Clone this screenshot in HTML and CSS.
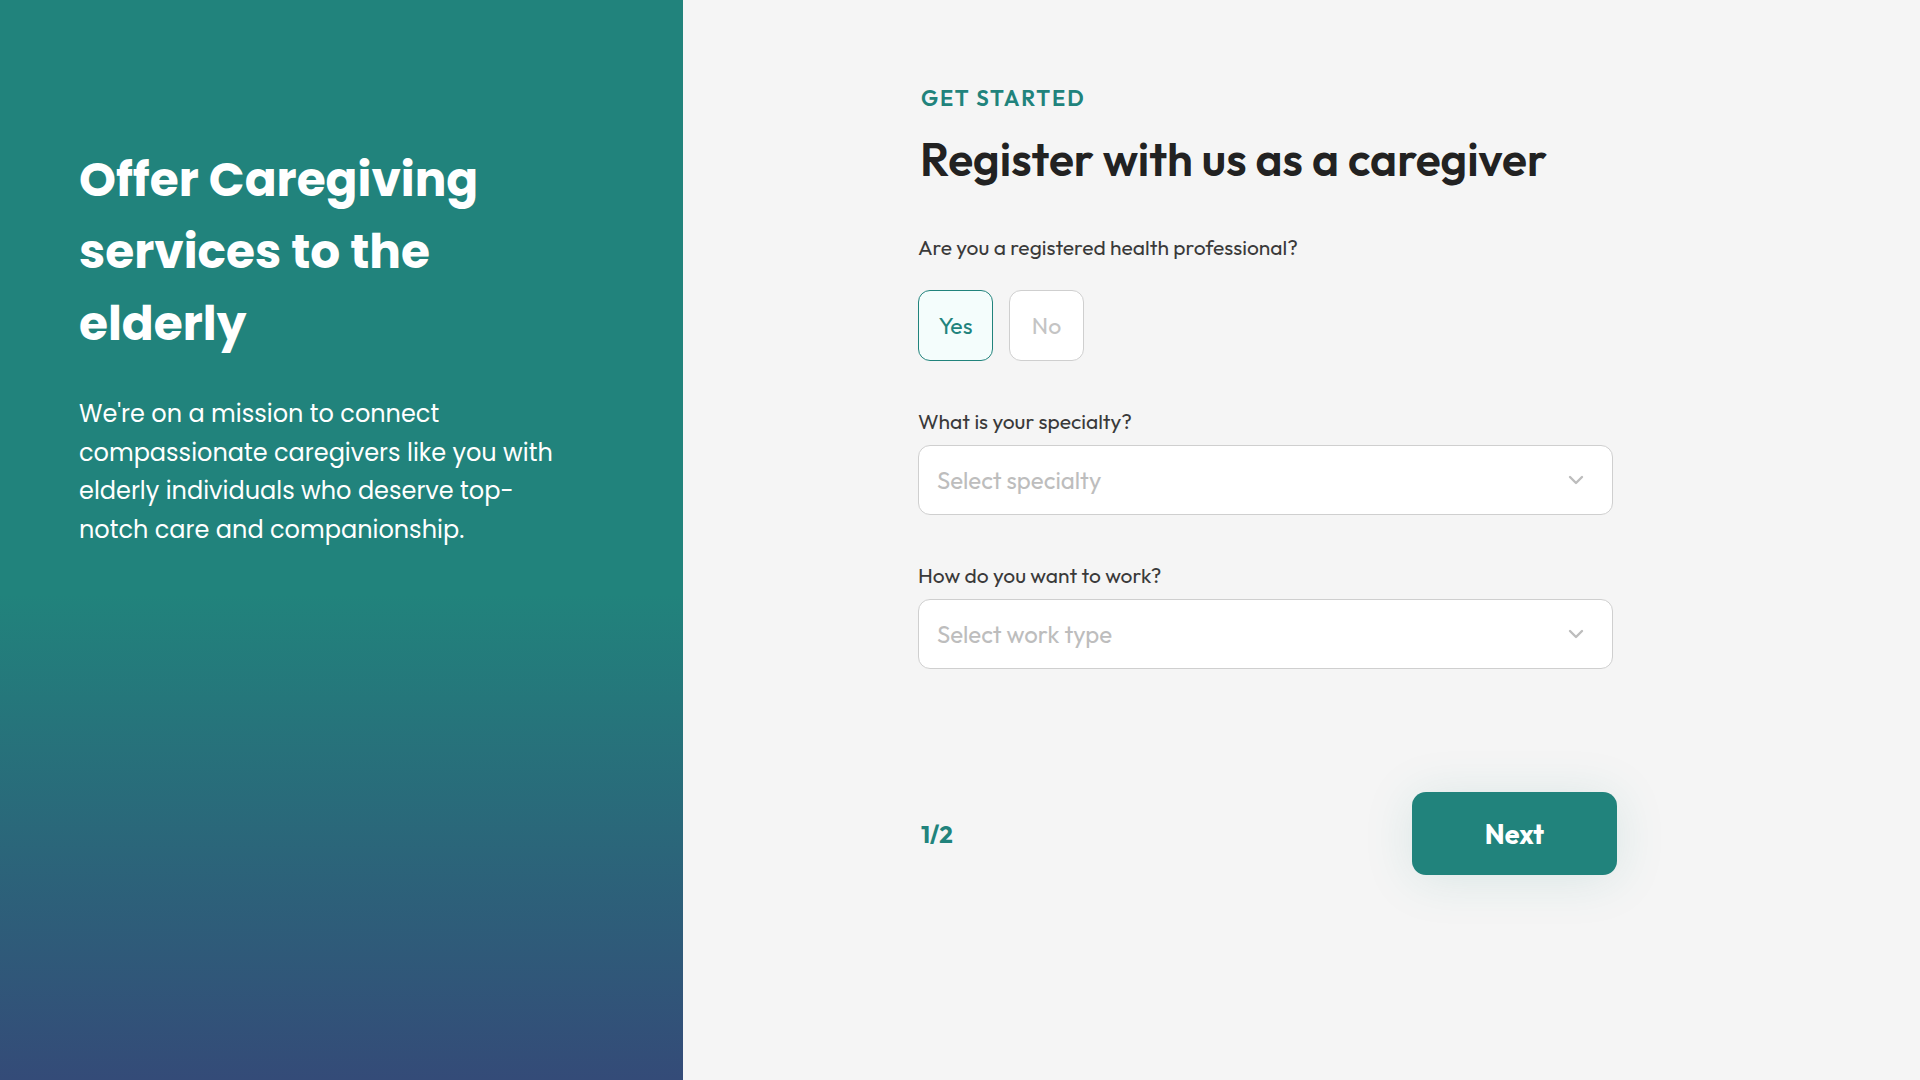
FILE: index.html
```html
<!DOCTYPE html>
<html lang="en">
<head>
<meta charset="utf-8">
<title>Register as a caregiver</title>
<link rel="stylesheet" href="styles.css">
</head>
<body>
<div class="page">
  <aside class="hero">
    <h1 class="hero-title">Offer Caregiving services to the elderly</h1>
    <p class="hero-text">We're on a mission to connect compassionate caregivers like you with elderly individuals who deserve top-notch care and companionship.</p>
  </aside>
  <main class="panel">
    <form class="form">
      <div class="eyebrow">GET STARTED</div>
      <h2 class="title">Register with us as a caregiver</h2>

      <div class="field field-choice">
        <div class="label">Are you a registered health professional?</div>
        <div class="choices">
          <button type="button" class="choice choice-active">Yes</button>
          <button type="button" class="choice">No</button>
        </div>
      </div>

      <div class="field">
        <div class="label">What is your specialty?</div>
        <div class="select">
          <span class="placeholder">Select specialty</span>
          <svg class="chevron" width="16" height="10" viewBox="0 0 16 10"><path d="M2 2 L8 8 L14 2" fill="none" stroke="#bdbdbd" stroke-width="2.4" stroke-linecap="round" stroke-linejoin="round"/></svg>
        </div>
      </div>

      <div class="field">
        <div class="label">How do you want to work?</div>
        <div class="select">
          <span class="placeholder">Select work type</span>
          <svg class="chevron" width="16" height="10" viewBox="0 0 16 10"><path d="M2 2 L8 8 L14 2" fill="none" stroke="#bdbdbd" stroke-width="2.4" stroke-linecap="round" stroke-linejoin="round"/></svg>
        </div>
      </div>

      <div class="footer">
        <span class="step">1/2</span>
        <button type="button" class="next">Next</button>
      </div>
    </form>
  </main>
</div>
</body>
</html>
```
FILE: styles.css
```css
* { box-sizing: border-box; }
html, body { margin: 0; padding: 0; }
body {
  width: 1920px;
  height: 1080px;
  overflow: hidden;
  background: #f5f5f5;
  font-family: "Outfit", "Urbanist", "Lato", sans-serif;
}
.page {
  display: flex;
  height: 1080px;
}
.hero {
  width: 683px;
  flex: 0 0 683px;
  background: linear-gradient(to bottom, #21837c 0%, #21837c 55%, #344b78 100%);
  padding: 144px 80px 0 79px;
  color: #fff;
  font-family: "Poppins", "Open Sans", sans-serif;
}
.hero-title {
  margin: 0;
  font-size: 47px;
  line-height: 72px;
  font-weight: 700;
  max-width: 460px;
}
.hero-text {
  margin: 35px 0 0 0;
  font-size: 24px;
  line-height: 38.5px;
  font-weight: 400;
  max-width: 495px;
}
.panel {
  flex: 1;
  padding: 84px 0 0 235px;
}
.form {
  width: 698px;
  display: flex;
  flex-direction: column;
}
.eyebrow {
  font-size: 22px;
  line-height: 28px;
  font-weight: 600;
  color: #21837c;
  letter-spacing: 1.9px;
  padding-left: 3px;
}
.title {
  margin: 19px 0 0 0;
  font-size: 46px;
  line-height: 56px;
  font-weight: 600;
  color: #222;
  padding-left: 2px;
}
.field {
  display: flex;
  flex-direction: column;
  gap: 11px;
  margin-top: 47px;
}
.field-choice { gap: 30px; }
.label {
  font-size: 21px;
  line-height: 26px;
  color: #3a3a3a;
}
.choices {
  display: flex;
  gap: 16px;
}
.choice {
  width: 75px;
  height: 71px;
  border-radius: 12px;
  border: 1.5px solid #cfcfcf;
  background: #fff;
  color: #c4c4c4;
  font-family: inherit;
  font-size: 23px;
  padding: 0;
}
.choice-active {
  border-color: #21837c;
  background: #f4fdfc;
  color: #21837c;
}
.select {
  width: 695px;
  height: 70px;
  border: 1.5px solid #cfcfcf;
  border-radius: 12px;
  background: #fff;
  display: flex;
  align-items: center;
  justify-content: space-between;
  padding: 0 28px 0 18px;
}
.placeholder {
  font-size: 24px;
  color: #bdbdbd;
}
.footer {
  margin-top: 123px;
  display: flex;
  align-items: center;
  justify-content: space-between;
}
.step {
  font-size: 24px;
  font-weight: 700;
  color: #21837c;
  padding-left: 3px;
}
.next {
  width: 205px;
  height: 83px;
  border: none;
  border-radius: 14px;
  background: #21837c;
  color: #fff;
  font-family: inherit;
  font-size: 27px;
  font-weight: 700;
  box-shadow: 0 4px 50px rgba(33, 131, 124, 0.13);
  margin-right: -1px;
}
```
